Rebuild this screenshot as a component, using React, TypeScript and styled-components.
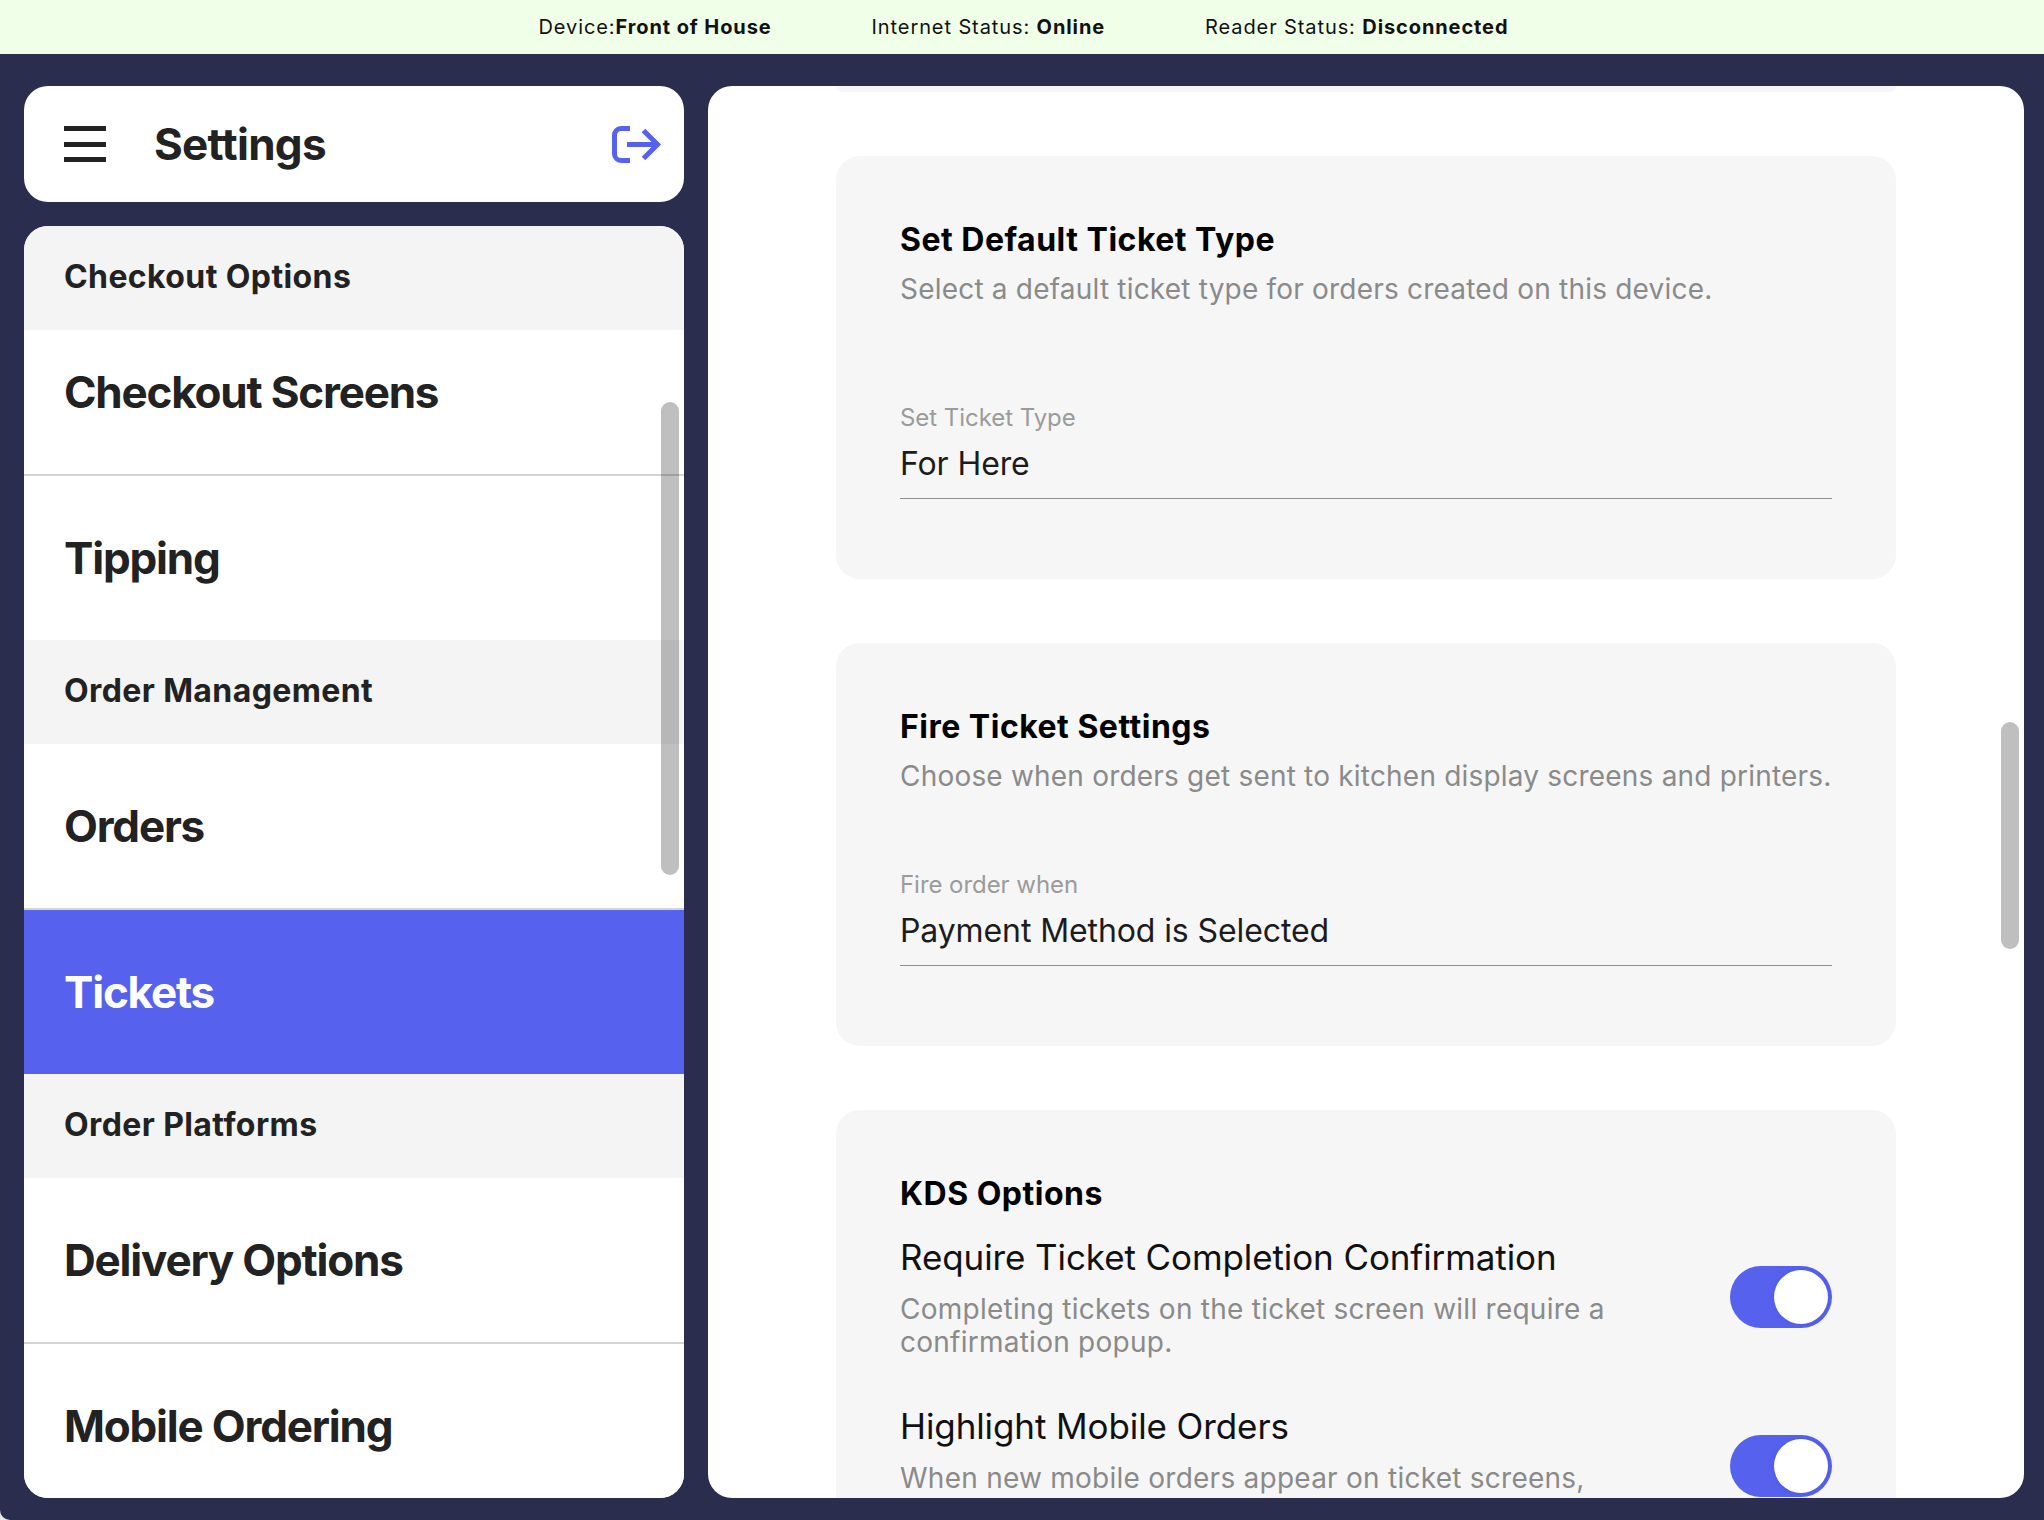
import React from "react";
import styled, { createGlobalStyle } from "styled-components";

const GlobalStyle = createGlobalStyle`
  html, body {
    margin: 0;
    padding: 0;
    background: #e8e8ea;
  }
  body {
    font-family: "Inter", "Liberation Sans", sans-serif;
    overflow: hidden;
  }
  * {
    box-sizing: border-box;
  }
`;

const Page = styled.div`
  width: 2044px;
  height: 1520px;
  display: flex;
  flex-direction: column;
  background: #2a2d4d;
  border-bottom-left-radius: 10px;
  overflow: hidden;
`;

const StatusBar = styled.div`
  height: 54px;
  flex: none;
  display: flex;
  justify-content: center;
  align-items: center;
  gap: 100px;
  padding-left: 3px;
  background: #f0ffe8;
  color: #111;
  font-size: 20px;
  letter-spacing: 0.9px;
`;

const Main = styled.div`
  flex: 1;
  min-height: 0;
  display: flex;
  gap: 24px;
  padding: 32px 20px 22px 24px;
`;

const Sidebar = styled.div`
  width: 660px;
  flex: none;
  display: flex;
  flex-direction: column;
  gap: 24px;
`;

const SidebarHeader = styled.div`
  height: 116px;
  flex: none;
  display: flex;
  align-items: center;
  padding: 0 22px 0 40px;
  background: #fff;
  border-radius: 24px;
`;

const Burger = styled.div`
  width: 42px;
  height: 36px;
  display: flex;
  flex-direction: column;
  justify-content: space-between;
  margin-right: 48px;

  span {
    height: 5px;
    background: #222;
  }
`;

const SidebarTitle = styled.h1`
  flex: 1;
  margin: 0;
  font-size: 44px;
  font-weight: 700;
  letter-spacing: -0.7px;
  color: #222;
`;

const NavList = styled.div`
  position: relative;
  flex: 1;
  min-height: 0;
  background: #fff;
  border-radius: 24px;
  overflow: hidden;
`;

const NavSection = styled.div`
  height: 104px;
  display: flex;
  align-items: center;
  padding: 0 0 3px 40px;
  background: #f4f4f4;
  color: #222;
  font-size: 32px;
  font-weight: 700;
  letter-spacing: 0.4px;
`;

const NavItem = styled.div<{ $active?: boolean; $divider?: boolean; $clipped?: boolean }>`
  height: ${(props) => (props.$clipped ? "146px" : props.$divider ? "166px" : "164px")};
  display: flex;
  align-items: center;
  padding-left: 40px;
  padding-bottom: ${(props) => (props.$clipped ? "20px" : "0")};
  background: ${(props) => (props.$active ? "#5661ee" : "#fff")};
  color: ${(props) => (props.$active ? "#fff" : "#222")};
  border-bottom: ${(props) => (props.$divider ? "2px solid #d4d4d4" : "none")};
  font-size: 44px;
  font-weight: 700;
  letter-spacing: -1.2px;
`;

const OverlayThumb = styled.div<{ $top: number; $height: number; $right: number }>`
  position: absolute;
  top: ${(props) => props.$top}px;
  right: ${(props) => props.$right}px;
  width: 18px;
  height: ${(props) => props.$height}px;
  border-radius: 9px;
  background: rgba(0, 0, 0, 0.25);
`;

const Content = styled.div`
  position: relative;
  flex: 1;
  min-width: 0;
  background: #fff;
  border-radius: 24px;
  overflow: hidden;
  display: flex;
  flex-direction: column;
  gap: 64px;
  padding: 0 128px;
`;

const Card = styled.section<{ $height?: number }>`
  flex: none;
  background: #f6f6f6;
  border-radius: 24px;
  padding: 64px;
  height: ${(props) => (props.$height ? `${props.$height}px` : "auto")};
`;

const PrevCardEnd = styled(Card)`
  padding: 0;
  height: 6px;
  border-radius: 0 0 24px 24px;
`;

const CardTitle = styled.h2`
  margin: 0;
  font-size: 32px;
  line-height: 40px;
  font-weight: 700;
  letter-spacing: 0.5px;
  color: #000;
`;

const CardHint = styled.p`
  margin: 9px 0 0;
  font-size: 28px;
  line-height: 40px;
  letter-spacing: 0.2px;
  color: #8a8a8a;
`;

const Field = styled.div<{ $gap: number }>`
  margin-top: ${(props) => props.$gap}px;
  border-bottom: 1px solid #8f8f8f;
  padding-bottom: 14px;
`;

const FieldLabel = styled.div`
  font-size: 24px;
  line-height: 30px;
  letter-spacing: -0.05px;
  color: #9b9b9b;
`;

const FieldValue = styled.div`
  margin-top: 11px;
  font-size: 32px;
  line-height: 40px;
  letter-spacing: -0.1px;
  color: #1c1c1c;
`;

const OptionRow = styled.div`
  display: flex;
  align-items: center;
  justify-content: space-between;
  margin-top: 21px;

  & + & {
    margin-top: 45px;
  }
`;

const OptionText = styled.div`
  width: 706px;
`;

const OptionTitle = styled.div`
  font-size: 35px;
  line-height: 44px;
  letter-spacing: -0.1px;
  white-space: nowrap;
  color: #111;
`;

const OptionHint = styled.div`
  margin-top: 14px;
  font-size: 28px;
  line-height: 33px;
  letter-spacing: 0.25px;
  color: #8a8a8a;
`;

const Toggle = styled.div`
  position: relative;
  width: 102px;
  height: 62px;
  flex: none;
  border-radius: 31px;
  background: #5661ee;

  &::after {
    content: "";
    position: absolute;
    top: 4px;
    right: 4px;
    width: 54px;
    height: 54px;
    border-radius: 50%;
    background: #fff;
    box-shadow: 0 0 8px rgba(0, 0, 0, 0.08);
  }
`;

const LogoutIcon = () => (
  <svg width="50" height="37" viewBox="0 0 50 37" fill="none" stroke="#5661ee" strokeWidth="5">
    <path d="M18 2.5H9a6.5 6.5 0 0 0-6.5 6.5v19a6.5 6.5 0 0 0 6.5 6.5h9" />
    <path d="M15 18.5h30" />
    <path d="M31.5 4.5l14 14-14 14" />
  </svg>
);

const App: React.FunctionComponent = () => {
  return (
    <Page>
      <GlobalStyle />
      <StatusBar>
        <span>Device:<b>Front of House</b></span>
        <span>Internet Status: <b>Online</b></span>
        <span>Reader Status: <b>Disconnected</b></span>
      </StatusBar>
      <Main>
        <Sidebar>
          <SidebarHeader>
            <Burger><span /><span /><span /></Burger>
            <SidebarTitle>Settings</SidebarTitle>
            <LogoutIcon />
          </SidebarHeader>
          <NavList>
            <NavSection>Checkout Options</NavSection>
            <NavItem $divider $clipped>Checkout Screens</NavItem>
            <NavItem>Tipping</NavItem>
            <NavSection>Order Management</NavSection>
            <NavItem $divider>Orders</NavItem>
            <NavItem $active>Tickets</NavItem>
            <NavSection>Order Platforms</NavSection>
            <NavItem $divider>Delivery Options</NavItem>
            <NavItem>Mobile Ordering</NavItem>
            <OverlayThumb $top={176} $height={473} $right={5} />
          </NavList>
        </Sidebar>
        <Content>
          <PrevCardEnd />
          <Card $height={423}>
            <CardTitle>Set Default Ticket Type</CardTitle>
            <CardHint>Select a default ticket type for orders created on this device.</CardHint>
            <Field $gap={94}>
              <FieldLabel>Set Ticket Type</FieldLabel>
              <FieldValue>For Here</FieldValue>
            </Field>
          </Card>
          <Card $height={403}>
            <CardTitle>Fire Ticket Settings</CardTitle>
            <CardHint>Choose when orders get sent to kitchen display screens and printers.</CardHint>
            <Field $gap={74}>
              <FieldLabel>Fire order when</FieldLabel>
              <FieldValue>Payment Method is Selected</FieldValue>
            </Field>
          </Card>
          <Card>
            <CardTitle>KDS Options</CardTitle>
            <OptionRow>
              <OptionText>
                <OptionTitle>Require Ticket Completion Confirmation</OptionTitle>
                <OptionHint>Completing tickets on the ticket screen will require a confirmation popup.</OptionHint>
              </OptionText>
              <Toggle />
            </OptionRow>
            <OptionRow>
              <OptionText>
                <OptionTitle>Highlight Mobile Orders</OptionTitle>
                <OptionHint>When new mobile orders appear on ticket screens, a highlight will be shown.</OptionHint>
              </OptionText>
              <Toggle />
            </OptionRow>
          </Card>
          <OverlayThumb $top={636} $height={227} $right={5} />
        </Content>
      </Main>
    </Page>
  );
};

export default App;
